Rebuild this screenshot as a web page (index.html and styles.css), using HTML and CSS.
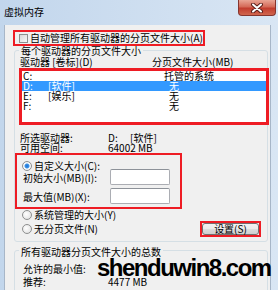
FILE: index.html
```html
<!DOCTYPE html>
<html lang="zh-CN">
<head>
    <meta charset="UTF-8">
    <meta name="viewport" content="width=device-width, initial-scale=1.0">
    <title>虚拟内存</title>
    <link rel="stylesheet" href="styles.css">
</head>
<body>
    <div class="window">
        <div class="titlebar">
            <span class="title">虚拟内存</span>
            <div class="close">
                <svg width="14" height="10" viewBox="0 0 14 10">
                    <path d="M3 1.5 L11 8.5 M11 1.5 L3 8.5" stroke="#5a1f1a" stroke-width="4" stroke-linecap="round"/>
                    <path d="M3 1.5 L11 8.5 M11 1.5 L3 8.5" stroke="#ffffff" stroke-width="2" stroke-linecap="round"/>
                </svg>
            </div>
        </div>

        <div class="client">
            <div class="auto mark">
                <span class="checkbox"></span>
                <span>自动管理所有驱动器的分页文件大小(A)</span>
            </div>

            <div class="group group-drives">
                <div class="group-title">每个驱动器的分页文件大小</div>
                <div class="list-head">
                    <span class="head-drive">驱动器 [卷标](D)</span>
                    <span>分页文件大小(MB)</span>
                </div>
                <div class="listbox mark">
                    <div class="row"><span class="c-drive">C:</span><span class="c-label"></span><span class="c-size">托管的系统</span></div>
                    <div class="row selected"><span class="c-drive">D:</span><span class="c-label">[软件]</span><span class="c-size none">无</span></div>
                    <div class="row"><span class="c-drive">E:</span><span class="c-label">[娱乐]</span><span class="c-size none">无</span></div>
                    <div class="row"><span class="c-drive">F:</span><span class="c-label"></span><span class="c-size none">无</span></div>
                </div>

                <div class="info first"><span class="info-key">所选驱动器:</span><span class="info-drive">D:</span><span>[软件]</span></div>
                <div class="info"><span class="info-key">可用空间:</span><span>64002 MB</span></div>

                <div class="custom mark">
                    <div class="radio-row"><span class="radio checked"></span>自定义大小(C):</div>
                    <div class="field"><span class="field-label">初始大小(MB)(I):</span><span class="textbox"></span></div>
                    <div class="field"><span class="field-label">最大值(MB)(X):</span><span class="textbox"></span></div>
                </div>

                <div class="radio-row outer system"><span class="radio"></span>系统管理的大小(Y)</div>
                <div class="bottom-row">
                    <div class="radio-row outer"><span class="radio"></span>无分页文件(N)</div>
                    <div class="set-mark mark"><button class="btn">设置(S)</button></div>
                </div>
            </div>

            <div class="group group-total">
                <div class="group-title">所有驱动器分页文件大小的总数</div>
                <div class="total first"><span class="total-key">允许的最小值:</span></div>
                <div class="total"><span class="total-key">推荐:</span><span>4477 MB</span></div>
                <div class="total"><span class="total-key">当前已分配:</span><span>4096 MB</span></div>
            </div>
        </div>

        <div class="watermark">shenduwin8.com</div>
    </div>
</body>
</html>
```

FILE: styles.css
```css
* {
    box-sizing: border-box;
}

html, body {
    margin: 0;
    padding: 0;
}

body {
    font-family: "Noto Sans CJK SC", "Noto Sans", sans-serif;
    font-size: 10px;
    color: #000;
    background: #fff;
}

.window {
    position: relative;
    width: 278px;
    height: 290px;
    overflow: hidden;
    display: flex;
    flex-direction: column;
    background: linear-gradient(to right, #c2d6ec, #d9e6f4);
}

/* title bar */
.titlebar {
    height: 25px;
    flex-shrink: 0;
    display: flex;
    align-items: flex-start;
}

.title {
    padding: 7px 0 0 4px;
    line-height: 10px;
}

.close {
    margin-left: auto;
    margin-right: 2px;
    width: 38px;
    height: 16px;
    display: flex;
    align-items: center;
    justify-content: center;
    border: 1px solid #86352e;
    border-top: none;
    border-radius: 0 0 4px 4px;
    background: linear-gradient(#e9a595, #d56a58 45%, #c23d2e 55%, #d0664e);
}

/* dialog body */
.client {
    flex: 1;
    margin: 0 7px 0 4px;
    background: #f0f0f0;
    border-left: 1px solid #a7b6c8;
    border-right: 1px solid #a7b6c8;
}

.mark {
    border: 2px solid #ee1c24;
}

.auto {
    margin: 5px 0 0 8px;
    width: 192px;
    height: 16px;
    display: flex;
    align-items: center;
    padding-left: 4px;
    line-height: 10px;
}

.checkbox {
    width: 9px;
    height: 9px;
    margin-right: 2px;
    border: 1px solid #8e8f8f;
    background: linear-gradient(135deg, #d8d8d8, #f7f7f7);
}

.group {
    margin: 4px 0 0 9px;
    width: 254px;
    border: 1px solid #d5dfe5;
    border-radius: 3px;
    display: flex;
    flex-direction: column;
}

.group-drives {
    height: 192px;
}

.group-total {
    margin-top: 8px;
    height: 60px;
}

.group-title {
    align-self: flex-start;
    margin: -5px 0 0 4px;
    padding: 0 2px;
    line-height: 10px;
    background: #f0f0f0;
}

.group-total .group-title {
    margin-top: -4px;
}

.list-head {
    display: flex;
    margin-top: 1px;
    padding-left: 5px;
    line-height: 10px;
}

.head-drive {
    width: 132px;
}

/* drive list */
.listbox {
    margin: 1px 0 0 4px;
    width: 250px;
    height: 57px;
    border-width: 3px;
    background: #fff;
}

.row {
    display: flex;
    height: 10px;
    line-height: 10px;
    padding-left: 1px;
}

.row.selected {
    background: #3399ff;
    color: #fff;
}

.c-drive {
    width: 25px;
}

.c-label {
    width: 116px;
}

.c-size.none {
    padding-left: 5px;
}

.info {
    display: flex;
    padding-left: 5px;
    line-height: 10px;
}

.info.first {
    margin-top: 8px;
}

.info-key {
    width: 88px;
}

.info-drive {
    width: 22px;
}

/* custom size */
.custom {
    width: 167px;
    height: 56px;
}

.radio-row {
    display: flex;
    align-items: center;
    height: 10px;
    line-height: 10px;
    padding-left: 5px;
}

.custom .radio-row {
    margin-top: 6px;
}

.radio-row.outer {
    padding-left: 7px;
}

.radio-row.system {
    margin-top: 1px;
}

.radio {
    width: 10px;
    height: 10px;
    margin-right: 2px;
    border: 1px solid #8e8f8f;
    border-radius: 50%;
    background: radial-gradient(circle at 40% 40%, #ffffff, #dcdcdc);
}

.radio.checked {
    background: radial-gradient(circle, #1d6fd0 0, #3d94e8 2px, #ffffff 3px, #e2e2e2 5px);
}

.field {
    display: flex;
    align-items: center;
    height: 16px;
    margin-top: -2px;
    padding-left: 6px;
}

.field + .field {
    margin-top: 3px;
}

.field-label {
    width: 87px;
}

.textbox {
    width: 60px;
    height: 16px;
    border: 1px solid #abadb3;
    border-top-color: #8d9299;
    border-radius: 2px;
    background: #fff;
}

.bottom-row {
    display: flex;
    align-items: center;
    margin-top: 1px;
    height: 16px;
}

.set-mark {
    margin-left: auto;
    margin-right: 6px;
    width: 61px;
    height: 16px;
}

.btn {
    display: block;
    width: 100%;
    height: 100%;
    padding: 0;
    font-family: inherit;
    font-size: 10px;
    line-height: 10px;
    color: #000;
    border: 1px solid #707070;
    border-radius: 3px;
    background: linear-gradient(#f2f2f2, #ebebeb 50%, #dddddd 51%, #cfcfcf);
}

/* totals */
.total {
    display: flex;
    height: 13px;
    line-height: 13px;
    padding-left: 8px;
}

.total.first {
    margin-top: 5px;
}

.total-key {
    width: 85px;
}

.watermark {
    position: absolute;
    left: 97px;
    top: 256px;
    font-family: "Liberation Sans", Arial, sans-serif;
    font-size: 24px;
    line-height: 24px;
    font-weight: bold;
    letter-spacing: -1.5px;
    color: #000;
}
```
